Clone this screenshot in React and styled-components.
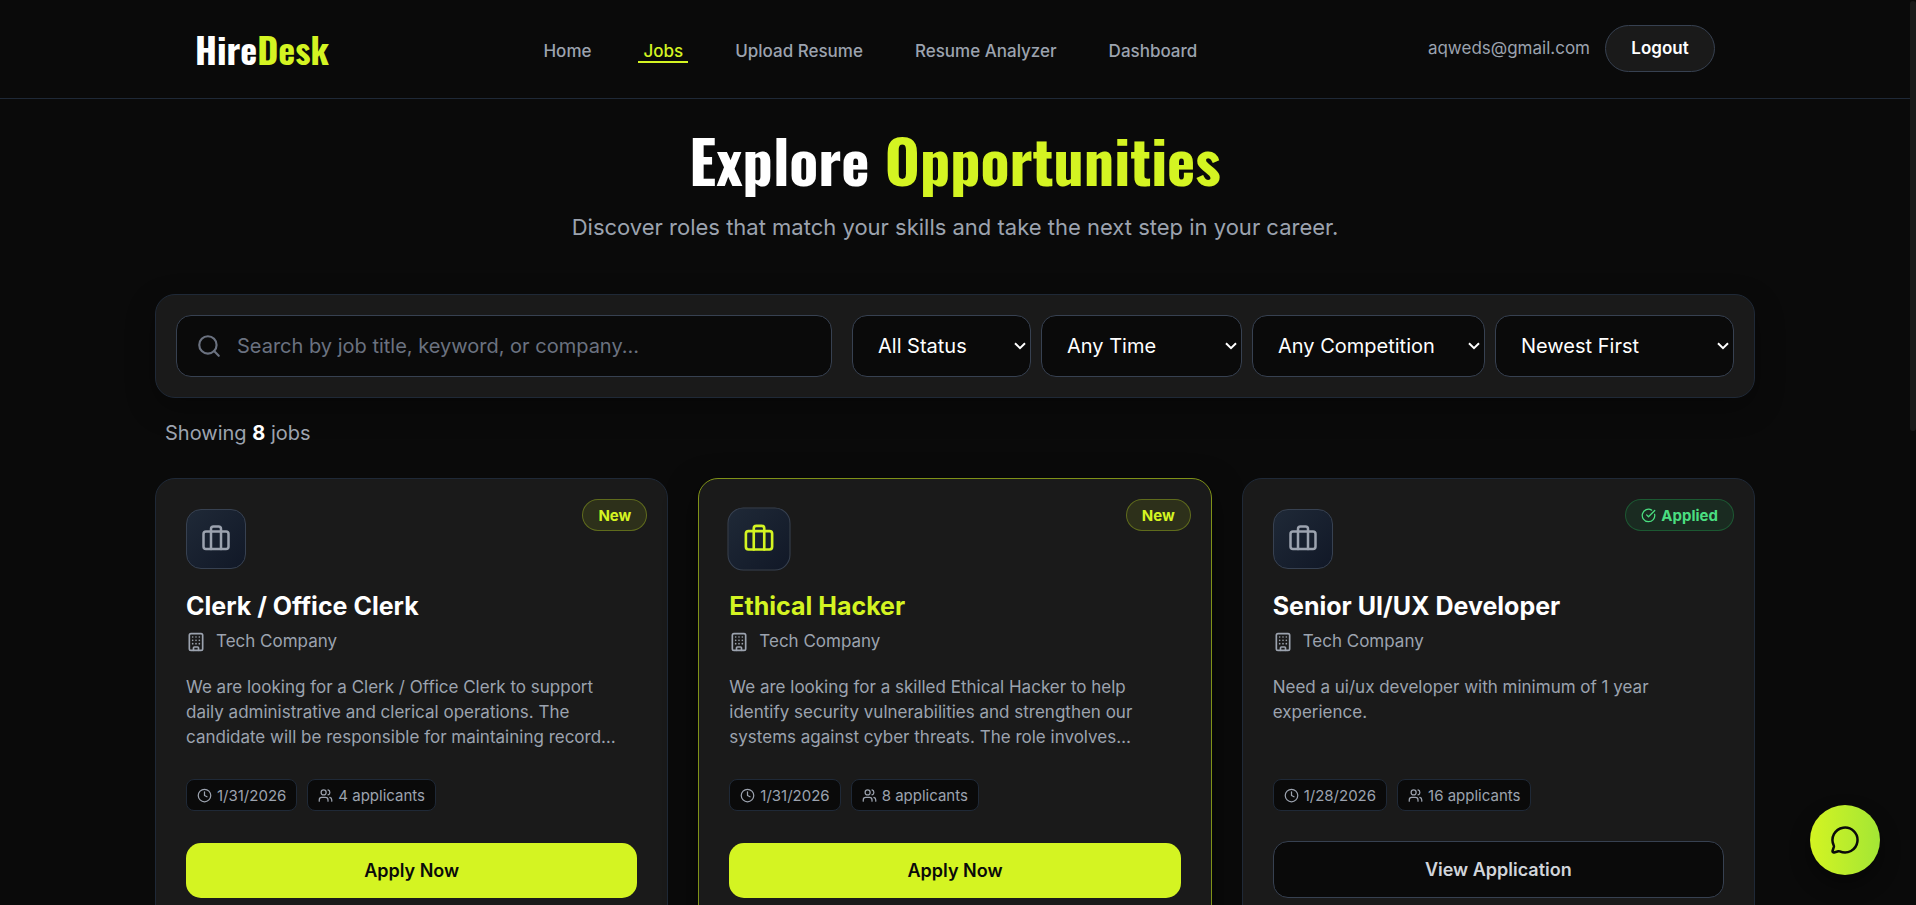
import React from 'react';
import styled, { createGlobalStyle, css } from 'styled-components';
import {
  Briefcase,
  Building,
  CircleCheckBig,
  Clock,
  MessageCircle,
  Search,
  Users,
} from 'lucide-react';

const links = ['Home', 'Jobs', 'Upload Resume', 'Resume Analyzer', 'Dashboard'];

const filters = [
  { label: 'Status', width: 179, options: ['All Status', 'Applied'] },
  { label: 'Posted', width: 201, options: ['Any Time', 'Last 7 days'] },
  { label: 'Competition', width: 233, options: ['Any Competition', 'Low'] },
  { label: 'Sort by', width: 239, options: ['Newest First', 'Oldest First'] },
];

const jobs = [
  {
    title: 'Clerk / Office Clerk',
    company: 'Tech Company',
    desc: 'We are looking for a Clerk / Office Clerk to support daily administrative and clerical operations. The candidate will be responsible for maintaining record…',
    date: '1/31/2026',
    applicants: 4,
  },
  {
    title: 'Ethical Hacker',
    company: 'Tech Company',
    desc: 'We are looking for a skilled Ethical Hacker to help identify security vulnerabilities and strengthen our systems against cyber threats. The role involves…',
    date: '1/31/2026',
    applicants: 8,
    active: true,
  },
  {
    title: 'Senior UI/UX Developer',
    company: 'Tech Company',
    desc: 'Need a ui/ux developer with minimum of 1 year experience.',
    date: '1/28/2026',
    applicants: 16,
    applied: true,
  },
];

const JobCard = ({ job }) => (
  <Card $active={job.active}>
    <Badge $applied={job.applied}>
      {job.applied && <CircleCheckBig size={15} />}
      {job.applied ? 'Applied' : 'New'}
    </Badge>
    <IconBox $active={job.active}>
      <Briefcase size={30} />
    </IconBox>
    <JobTitle $active={job.active}>{job.title}</JobTitle>
    <Company>
      <Building size={20} />
      {job.company}
    </Company>
    <Description>{job.desc}</Description>
    <Chips>
      <Chip>
        <Clock size={15} />
        {job.date}
      </Chip>
      <Chip>
        <Users size={15} />
        {job.applicants} applicants
      </Chip>
    </Chips>
    <Action type="button" $applied={job.applied}>
      {job.applied ? 'View Application' : 'Apply Now'}
    </Action>
  </Card>
);

const App = () => {
  return (
    <Page>
      <GlobalStyle />
      <Header>
        <HeaderInner>
          <Logo href="#home">
            Hire<span>Desk</span>
          </Logo>
          <Nav>
            {links.map((link) => (
              <NavLink key={link} href="#" $active={link === 'Jobs'}>
                {link}
              </NavLink>
            ))}
          </Nav>
          <Account>
            <span>aqweds@gmail.com</span>
            <Logout type="button">Logout</Logout>
          </Account>
        </HeaderInner>
      </Header>

      <Main>
        <Hero>
          <h1>
            Explore <span>Opportunities</span>
          </h1>
          <p>
            Discover roles that match your skills and take the next step in your
            career.
          </p>
        </Hero>

        <FilterBar>
          <SearchBox>
            <Search size={26} />
            <input
              type="text"
              aria-label="Search jobs"
              placeholder="Search by job title, keyword, or company..."
            />
          </SearchBox>
          <Selects>
            {filters.map((filter) => (
              <Select
                key={filter.label}
                aria-label={filter.label}
                $width={filter.width}
              >
                {filter.options.map((option) => (
                  <option key={option}>{option}</option>
                ))}
              </Select>
            ))}
          </Selects>
        </FilterBar>

        <Count>
          Showing <strong>8</strong> jobs
        </Count>

        <Grid>
          {jobs.map((job) => (
            <JobCard key={job.title} job={job} />
          ))}
        </Grid>
      </Main>

      <ChatButton type="button" aria-label="Open chat">
        <MessageCircle size={30} />
      </ChatButton>
      <ScrollThumb />
    </Page>
  );
};

export default App;

const GlobalStyle = createGlobalStyle`
  * {
    box-sizing: border-box;
    margin: 0;
    padding: 0;
  }

  body {
    background: #0a0a0a;
    color: white;
    font-family: Inter, "Liberation Sans", sans-serif;
  }

  button, input, select {
    font-family: inherit;
  }
`;

const Page = styled.div`
  height: 100vh;
  overflow: hidden;
  padding-right: 6px;
`;

const Header = styled.header`
  border-bottom: 1px solid #1f2937;
`;

const HeaderInner = styled.div`
  max-width: 1600px;
  height: 98px;
  margin: 0 auto;
  padding: 0 40px 2px;
  display: flex;
  align-items: center;
  justify-content: space-between;
`;

const Logo = styled.a`
  font-family: Oswald, 'Liberation Sans Narrow', 'Liberation Sans', sans-serif;
  font-size: 36px;
  font-weight: 700;
  color: white;
  text-decoration: none;

  span {
    color: #d4f422;
  }
`;

const Nav = styled.nav`
  display: flex;
  gap: 42px;
  margin-right: 16px;
`;

const NavLink = styled.a`
  padding: 8px 5px 0;
  font-size: 17px;
  font-weight: 500;
  line-height: 20px;
  text-decoration: none;
  color: ${({ $active }) => ($active ? '#d4f422' : '#9ca3af')};
  border-bottom: 2px solid ${({ $active }) => ($active ? '#d4f422' : 'transparent')};
`;

const Account = styled.div`
  display: flex;
  align-items: center;
  gap: 15px;
  color: #9ca3af;
  font-size: 17px;
`;

const Logout = styled.button`
  width: 110px;
  height: 47px;
  border: 1px solid #374151;
  border-radius: 24px;
  background: #1a1a1a;
  color: white;
  font-size: 17px;
  font-weight: 600;
  cursor: pointer;
`;

const Main = styled.main`
  max-width: 1600px;
  margin: 0 auto;
  padding: 20px 0 40px;
`;

const Hero = styled.section`
  text-align: center;

  h1 {
    font-family: Oswald, 'Liberation Sans Narrow', 'Liberation Sans', sans-serif;
    font-size: 60px;
    font-weight: 700;
    line-height: 80px;

    span {
      color: #d4f422;
    }
  }

  p {
    margin: 10px 0 49px;
    font-size: 22px;
    line-height: 36px;
    color: #9ca3af;
  }
`;

const FilterBar = styled.section`
  display: flex;
  gap: 20px;
  padding: 20px;
  border: 1px solid #1f2937;
  border-radius: 20px;
  background: #1a1a1a;
  box-shadow: 0 10px 30px rgba(0, 0, 0, 0.3);
`;

const control = css`
  height: 62px;
  border: 1px solid #374151;
  border-radius: 15px;
  background: #0a0a0a;
`;

const SearchBox = styled.label`
  ${control}
  flex: 1;
  display: flex;
  align-items: center;
  gap: 15px;
  padding: 0 19px;
  color: #6b7280;

  input {
    flex: 1;
    border: none;
    outline: none;
    background: none;
    color: white;
    font-size: 20px;
  }

  input::placeholder {
    color: #6b7280;
  }
`;

const Selects = styled.div`
  display: flex;
  gap: 10px;
`;

const chevron =
  "data:image/svg+xml,%3Csvg xmlns='http://www.w3.org/2000/svg' width='12' height='8' fill='none' stroke='white' stroke-width='2'%3E%3Cpath d='M1 1.2l5 5 5-5'/%3E%3C/svg%3E";

const Select = styled.select`
  ${control}
  appearance: none;
  width: ${({ $width }) => $width}px;
  padding-left: 25px;
  background: #0a0a0a url("${chevron}") no-repeat right 4px center;
  color: white;
  font-size: 20px;
  cursor: pointer;
`;

const Count = styled.p`
  padding: 20px 10px 30px;
  font-size: 20px;
  line-height: 30px;
  color: #9ca3af;

  strong {
    color: white;
  }
`;

const Grid = styled.section`
  display: grid;
  grid-template-columns: repeat(3, 1fr);
  gap: 30px;
`;

const Card = styled.article`
  position: relative;
  display: flex;
  flex-direction: column;
  padding: 30px;
  border: 1px solid #1f2937;
  border-radius: 20px;
  background: #1a1a1a;

  ${({ $active }) =>
    $active &&
    css`
      border-color: #7f9118;
      box-shadow: 0 10px 30px rgba(0, 0, 0, 0.5);
    `}
`;

const Badge = styled.span`
  position: absolute;
  top: 20px;
  right: 20px;
  display: flex;
  align-items: center;
  gap: 5px;
  height: 32px;
  padding: 0 15px;
  border: 1px solid rgba(212, 244, 34, 0.3);
  border-radius: 16px;
  background: rgba(212, 244, 34, 0.1);
  color: #d4f422;
  font-size: 15px;
  font-weight: 700;

  ${({ $applied }) =>
    $applied &&
    css`
      border-color: rgba(34, 197, 94, 0.3);
      background: rgba(34, 197, 94, 0.1);
      color: #4ade80;
    `}
`;

const IconBox = styled.div`
  width: 60px;
  height: 60px;
  display: flex;
  align-items: center;
  justify-content: center;
  border: 1px solid #374151;
  border-radius: 15px;
  background: linear-gradient(135deg, #1f2937, #111827);
  color: #9ca3af;

  ${({ $active }) =>
    $active &&
    css`
      transform: scale(1.05);
      color: #d4f422;
    `}
`;

const JobTitle = styled.h2`
  margin-top: 20px;
  font-size: 25px;
  font-weight: 700;
  line-height: 35px;
  color: ${({ $active }) => ($active ? '#d4f422' : 'white')};
`;

const Company = styled.p`
  display: flex;
  align-items: center;
  gap: 10px;
  margin-bottom: 16px;
  font-size: 17px;
  line-height: 35px;
  color: #9ca3af;
`;

const Description = styled.p`
  min-height: 75px;
  margin-bottom: 29px;
  padding-right: 5px;
  font-size: 17px;
  line-height: 25px;
  color: #9ca3af;
`;

const Chips = styled.div`
  display: flex;
  gap: 10px;
  margin-bottom: 30px;
`;

const Chip = styled.span`
  display: flex;
  align-items: center;
  gap: 5px;
  height: 32px;
  padding: 0 10px;
  border: 1px solid #1f2937;
  border-radius: 8px;
  background: #0a0a0a;
  color: #9ca3af;
  font-size: 15px;
`;

const Action = styled.button`
  margin-top: auto;
  height: 55px;
  border: none;
  border-radius: 15px;
  background: #d4f422;
  color: #0a0a0a;
  font-size: 18px;
  font-weight: 600;
  cursor: pointer;

  ${({ $applied }) =>
    $applied &&
    css`
      height: 57px;
      border: 1px solid #374151;
      background: #0a0a0a;
      color: #d1d5db;
    `}
`;

const ChatButton = styled.button`
  position: fixed;
  right: 36px;
  bottom: 30px;
  width: 70px;
  height: 70px;
  display: flex;
  align-items: center;
  justify-content: center;
  border: none;
  border-radius: 50%;
  background: linear-gradient(to right, #d4f422, #a3e635);
  box-shadow: 0 10px 20px rgba(0, 0, 0, 0.4);
  color: #0a0a0a;
  cursor: pointer;
`;

const ScrollThumb = styled.div`
  position: fixed;
  top: 1px;
  right: 0;
  width: 6px;
  height: 430px;
  border-radius: 3px;
  background: #1a1a1a;
`;
